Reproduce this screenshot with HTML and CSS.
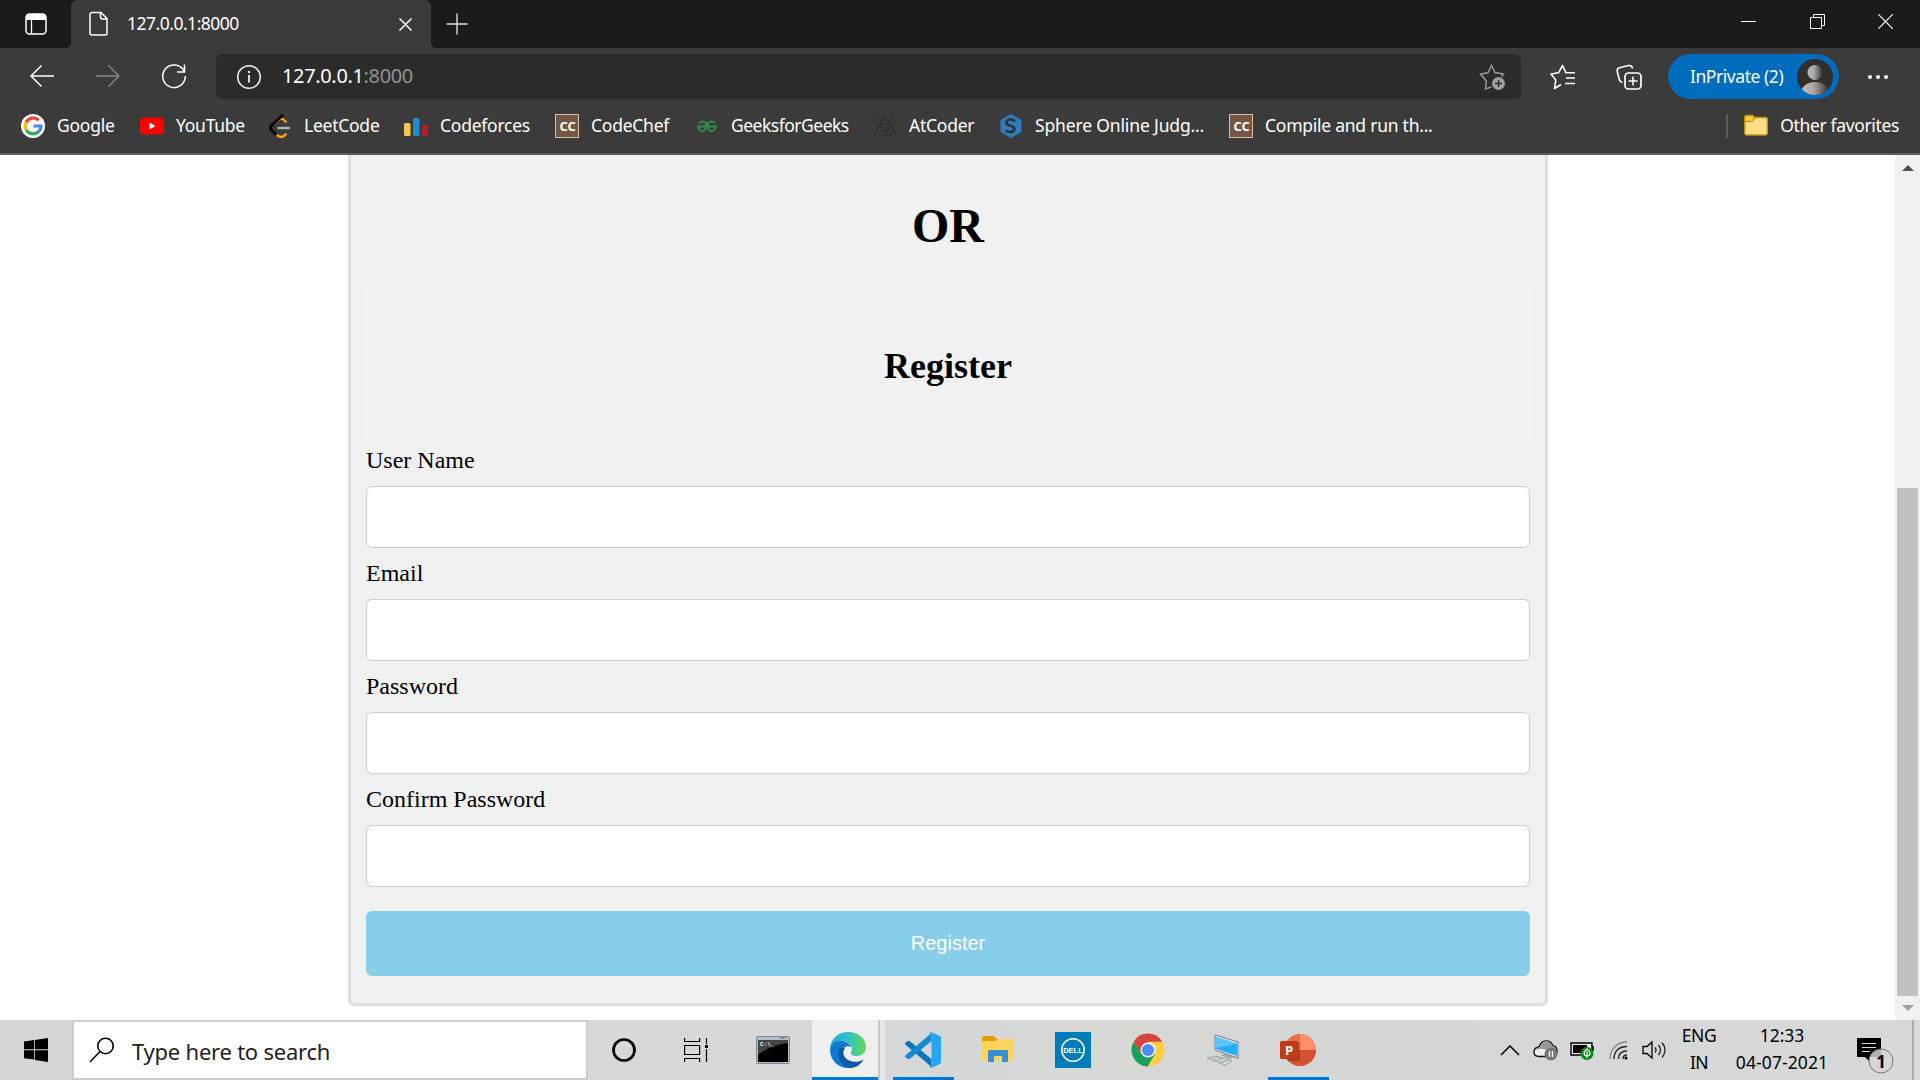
FILE: index.html
```html
<!DOCTYPE html>
<html lang="en">
<head>
<meta charset="utf-8">
<title>127.0.0.1:8000</title>
<link rel="stylesheet" href="styles.css">
</head>
<body>
<div class="desktop">
  <header class="browser">
    <div class="tabstrip">
      <div class="tab-actions">
        <svg width="22" height="22" viewBox="0 0 22 22"><rect x="1" y="1" width="20" height="20" rx="3.5" fill="none" stroke="#fff" stroke-width="1.5"/><path d="M1 7V4a3 3 0 0 1 3-3h14a3 3 0 0 1 3 3v3z" fill="#fff"/><path d="M6.5 7v14" stroke="#fff" stroke-width="1.3"/></svg>
      </div>
      <div class="tab">
        <svg class="tab-file" width="20" height="26" viewBox="0 0 20 26"><path d="M4 1.5h8l6 6V22a2 2 0 0 1-2 2H3a2 2 0 0 1-2-2V3.500a2 2 0 0 1 2-2zM11.500 1.500V6a2 2 0 0 0 2 2H18" fill="none" stroke="#fff" stroke-width="1.5"/></svg>
        <span class="tab-title">127.0.0.1:8000</span>
        <svg class="tab-close" width="13" height="13" viewBox="0 0 13 13"><path d="M.5.5l12 12M12.500.5l-12 12" stroke="#fff" stroke-width="1.500"/></svg>
      </div>
      <svg class="new-tab" width="22" height="22" viewBox="0 0 22 22"><path d="M11 .5v21M.5 11h21" stroke="#ddd" stroke-width="1.400"/></svg>
      <div class="window-controls">
        <span><svg width="15" height="15"><path d="M0 7.500h15" stroke="#fff"/></svg></span>
        <span><svg width="15" height="15"><path d="M3.500 3.500v-3h11v11h-3M.5 3.500h11v11H.5z" fill="none" stroke="#fff"/></svg></span>
        <span><svg width="15" height="15"><path d="M0 0l15 15M15 0L0 15" stroke="#fff" stroke-width="1.200"/></svg></span>
      </div>
    </div>

    <div class="toolbar">
      <div class="nav">
        <svg width="24" height="24" viewBox="0 0 24 24"><path d="M24 12H1M11.500 1.500L1 12l10.500 10.500" fill="none" stroke="#fff" stroke-width="1.500"/></svg>
        <svg width="24" height="24" viewBox="0 0 24 24"><path d="M0 12h23M12.500 1.500L23 12 12.500 22.500" fill="none" stroke="#858585" stroke-width="1.500"/></svg>
        <svg width="24" height="25" viewBox="0 0 24 25"><path d="M22 7A11.300 11.300 0 1 0 23.300 12M22.500.5V8H15" fill="none" stroke="#fff" stroke-width="1.500"/></svg>
      </div>
      <div class="address">
        <svg width="26" height="26" viewBox="0 0 26 26"><circle cx="13" cy="13" r="11.300" fill="none" stroke="#eee" stroke-width="1.500"/><path d="M13 11v7.500" stroke="#ddd" stroke-width="2"/><circle cx="13" cy="8" r="1.200" fill="#eee"/></svg>
        <span class="url">127.0.0.1<span class="port">:8000</span></span>
        <svg class="add-fav" width="27" height="27" viewBox="0 0 27 27"><path d="M12 23l-5.500 2 .8-8L1.500 10l7.500-1.200L12.500 1.500 16 8.500l8.500 1.500-2 2.500" fill="none" stroke="#999" stroke-width="1.500"/><circle cx="19.500" cy="19.500" r="6.500" fill="#a0a0a0"/><path d="M19.500 16v7M16 19.500h7" stroke="#2b2b2b" stroke-width="1.500"/></svg>
      </div>
      <svg class="favorites" width="26" height="26" viewBox="0 0 26 26"><path d="M11 20.500l-6.500 4 1.300-8.500L1 10l7.500-1.200L12.500 1.500l3.500 7.300h9M16 14h9M15 19.500h10" fill="none" stroke="#fff" stroke-width="1.600" stroke-linejoin="round"/></svg>
      <svg class="collections" width="26" height="26" viewBox="0 0 26 26"><path d="M6.500 18.500Q4 18 3.500 16L1.200 7.500Q.8 4.500 3.500 3.800L12.500 1.500Q16 1 16.500 4.500" fill="none" stroke="#fff" stroke-width="1.600"/><rect x="9" y="9" width="16" height="16" rx="3.500" fill="none" stroke="#fff" stroke-width="1.700"/><path d="M17 12.500v9M12.500 17h9" stroke="#fff" stroke-width="1.500"/></svg>
      <div class="profile"><span>InPrivate (2)</span>
        <svg width="36" height="36" viewBox="0 0 36 36"><defs><linearGradient id="av"><stop stop-color="#c2bebb"/><stop offset=".45" stop-color="#aaa6a3"/><stop offset="1" stop-color="#33302d"/></linearGradient><clipPath id="avc"><circle cx="18" cy="18" r="18"/></clipPath></defs><circle cx="18" cy="18" r="18" fill="#312e2b"/><g clip-path="url(#avc)" fill="url(#av)"><circle cx="18" cy="13.500" r="7.500"/><ellipse cx="18" cy="34" rx="14" ry="11"/></g></svg>
      </div>
      <svg class="more" width="22" height="6"><g fill="#fff"><circle cx="3" cy="3" r="2"/><circle cx="11" cy="3" r="2"/><circle cx="19" cy="3" r="2"/></g></svg>
    </div>

    <nav class="bookmarks">
      <a class="bm bm-google"><svg viewBox="0 0 24 24"><circle cx="12" cy="12" r="12" fill="#fff"/><g fill="none" stroke-width="3.200"><path d="M17.800 6.200A8 8 0 0 0 5.200 8.300" stroke="#ea4335"/><path d="M5.200 8.300a8 8 0 0 0 0 7.700" stroke="#fbbc05"/><path d="M5.200 16a8 8 0 0 0 12.200 1.800" stroke="#34a853"/><path d="M17.300 17.900A8 8 0 0 0 20 12H12.500" stroke="#4285f4"/></g></svg><span>Google</span></a>
      <a class="bm bm-youtube"><svg viewBox="0 0 24 24"><rect y="3.500" width="24" height="17" rx="4" fill="#f00"/><path d="M9.500 8.500v7l6-3.500z" fill="#fff"/></svg><span>YouTube</span></a>
      <a class="bm bm-leet"><svg viewBox="0 0 24 24"><path d="M7.500 8.500L11.500 5q2.500-1 4.500 1l2.500 2.500M8 20q4.500 5 8.500 1.500l2-2" fill="none" stroke="#ffa116" stroke-width="2.400"/><path d="M15 1L3.500 11.500q-2 2 0 4.500L8.500 21" fill="none" stroke="#000" stroke-width="2.800"/><path d="M9.500 14h12.500" stroke="#b3b3b3" stroke-width="2.400"/></svg><span>LeetCode</span></a>
      <a class="bm bm-forces"><svg viewBox="0 0 24 24"><rect y="9" width="6.500" height="13" rx="1.500" fill="#f6c751"/><rect x="9" y="4" width="6.500" height="18" rx="1.500" fill="#1b8dd0"/><rect x="18" y="11" width="6" height="11" rx="1.500" fill="#b21f24"/></svg><span>Codeforces</span></a>
      <a class="bm bm-chef"><svg viewBox="0 0 24 24"><rect x=".5" y=".5" width="23" height="23" fill="#745743" stroke="#d8bfa7"/><text x="12.500" y="17" class="cc">CC</text></svg><span>CodeChef</span></a>
      <a class="bm bm-geeks"><svg viewBox="0 0 24 24"><g fill="none" stroke="#2f8d46" stroke-width="2"><path d="M4 9q4-3 7 0v3.500M20 9q-4-3-7 0v3.500M2 12.500h20M3.500 13c0 5 7.500 5.500 7.500-.5M20.500 13c0 5-7.500 5.500-7.500-.5"/></g></svg><span>GeeksforGeeks</span></a>
      <a class="bm bm-at"><svg viewBox="0 0 24 24"><g fill="none" stroke="#2d2d2d" stroke-width="1.200"><path d="M8 7q4-3 8 0l1 6-5 5-5-5zM10 2h4M4 5l3-2M17 3l3 2M2 8l3 2-1 7-3 2M22 8l-3 2 1 7 3 2M6 21h12"/><path d="M9 10h6M10 13h4"/></g></svg><span>AtCoder</span></a>
      <a class="bm bm-sphere"><svg viewBox="0 0 24 24"><path d="M12 0l10.500 6v12L12 24 1.500 18V6z" fill="#2f7bbd"/><path d="M16 7.500q-1-2-4-2c-6 0-6 5-1 6s7 6 0 6.500q-3.500 0-4-2" fill="none" stroke="#333" stroke-width="2.700"/></svg><span>Sphere Online Judg...</span></a>
      <a class="bm bm-compile"><svg viewBox="0 0 24 24"><rect x=".5" y=".5" width="23" height="23" fill="#745743" stroke="#d8bfa7"/><text x="12.500" y="17" class="cc">CC</text></svg><span>Compile and run th...</span></a>
      <a class="bm bm-other"><svg viewBox="0 0 24 24"><path d="M.8 3.500q0-2 2-2h6l2 2h10.500q2 0 2 2v13.500q0 2-2 2H2.800q-2 0-2-2z" fill="#ffdf86" stroke="#c6920e" stroke-width="1.400"/><path d="M1 7.500V3q0-1.300 1.500-1.300h6L10.500 4 8 7.200z" fill="#ffcd43" stroke="#c6920e" stroke-width="1.200"/></svg><span>Other favorites</span></a>
    </nav>
  </header>

  <div class="viewport">
    <main class="page">
      <div class="card">
        <h1>OR</h1>
        <h2>Register</h2>
        <form>
          <label for="user">User Name</label><input id="user" type="text">
          <label for="email">Email</label><input id="email" type="text">
          <label for="pw">Password</label><input id="pw" type="password">
          <label for="pw2">Confirm Password</label><input id="pw2" type="password">
          <button type="button">Register</button>
        </form>
      </div>
    </main>
    <div class="scrollbar">
      <svg width="12" height="6"><path d="M0 6L6 0l6 6z" fill="#505050"/></svg>
      <div class="thumb"></div>
      <svg width="12" height="6"><path d="M0 0l6 6 6-6z" fill="#a0a0a0"/></svg>
    </div>
  </div>

  <footer class="taskbar">
    <div class="start"><svg width="24" height="24" viewBox="0 0 24 24"><path d="M0 3.500l10-1.400v9.200H0zM10.800 2L24 0v11.300H10.800zM0 12.200h10v9.300L0 20.300zM10.800 12.200H24V24l-13.200-1.900z"/></svg></div>
    <div class="search">
      <svg width="26" height="26" viewBox="0 0 26 26"><circle cx="16.500" cy="9" r="7.700" fill="none" stroke="#000" stroke-width="1.600"/><path d="M11 14.500L1 25" stroke="#000" stroke-width="1.600"/></svg>
      <span>Type here to search</span>
    </div>
    <div class="slot narrow"><svg width="26" height="26"><circle cx="13" cy="13" r="10.500" fill="none" stroke="#000" stroke-width="2.700"/></svg></div>
    <div class="slot narrow"><svg width="24" height="24"><path d="M.6 0v3.500h15V0M.6 7.500h15v9h-15zM.6 24v-3.500h15V24M22.500 0v6M22.500 11v13" fill="none" stroke="#000" stroke-width="1.200"/><path d="M21 7h3v3h-3z"/></svg></div>
    <div class="slot first"><svg width="34" height="28" viewBox="0 0 34 28"><rect x=".5" y=".5" width="33" height="27" rx="1" fill="#b4bdc9" stroke="#7e8791"/><path d="M2 4h30v22H2z"/><path d="M2 4h30v3Q14 9 2 19z" fill="#444"/><path d="M24 2h6" stroke="#536b91" stroke-width="1.500" stroke-dasharray="1.500 1"/><text x="4" y="10" class="prompt">C:\_</text></svg></div>
    <div class="slot edge">
      <svg width="36" height="36" viewBox="0 0 36 36"><defs><linearGradient id="ea" x1="0" x2="1"><stop stop-color="#28a5dc"/><stop offset=".5" stop-color="#2fc2c9"/><stop offset="1" stop-color="#64d94a"/></linearGradient><linearGradient id="eb" x1="0" y1="0" x2="0" y2="1"><stop stop-color="#1479ca"/><stop offset="1" stop-color="#087bd8"/></linearGradient></defs><path d="M0 18C0 7 8 0 18 0c11 0 18 7 18 15 0 6-5 9-9 9-4 0-7-1-6-4 3-4-1-10-7-11C7 8 1 12 0 18z" fill="url(#ea)"/><path d="M0 18C1 11 7 8 13 9c5 1 8 4 8 6-5-2-8 1-8 6 0 9 10 15 18 9l2-2c-3 5-8 8-15 8C8 36 0 28 0 18z" fill="url(#eb)"/><path d="M10 16c-4 9 0 18 10 20 6 0 11-4 13.500-8.500-5 3-11 3-15.500.5-5-3-6-8-3-12z" fill="#1257a4"/></svg>
    </div>
    <div class="slot open"><svg width="36" height="36" viewBox="0 0 36 36"><path d="M0 11l3-2q1-.5 2 .3L26.500 27v8L.8 13q-1-1-.8-2z" fill="#0877b9"/><path d="M0 25l3 2q1 .5 2-.3L26.500 9V1L.8 23q-1 1-.8 2z" fill="#168bd2"/><path d="M26 0l9 4q1 .5 1 2v24q0 1.500-1 2l-9 4-2-1 2.500-1V2L24 1z" fill="#27a4f2"/></svg></div>
    <div class="slot"><svg width="34" height="28" viewBox="0 0 34 28"><path d="M1 2q0-2 2-2h10l3 3h16q1 0 1 1v21H1z" fill="#dfa108"/><path d="M1 5h13l3-2h16v22H1z" fill="#ffd35b"/><path d="M7 26V15q0-1 1-1h18q1 0 1 1v11h-6v-6h-8v6z" fill="#348fd5"/></svg></div>
    <div class="slot"><svg width="36" height="36" viewBox="0 0 36 36"><path d="M0 0h36v36H0z" fill="#007db8"/><circle cx="18" cy="18" r="11.200" fill="none" stroke="#fff" stroke-width="1.500"/><text x="18" y="21" class="dell">DELL</text></svg></div>
    <div class="slot"><svg width="34" height="34" viewBox="0 0 34 34"><circle cx="17" cy="17" r="16.500" fill="#ffce45"/><path d="M17 .5a16.500 16.500 0 0 1 14.300 8.300H17L10 21 2.700 8.700A16.500 16.500 0 0 1 17 .5z" fill="#d7453d"/><path d="M2.700 8.700a16.500 16.500 0 0 0 14 24.800L24 21H10z" fill="#17a05d"/><circle cx="17" cy="17" r="7.500" fill="#f4f6fa"/><circle cx="17" cy="17" r="6" fill="#4c8bf5"/></svg></div>
    <div class="slot"><svg width="34" height="34" viewBox="0 0 34 34"><path d="M9 2l23 7v16L9 17z" fill="#e9f3f8" stroke="#647985"/><path d="M10 4l21 6.500V23L10 16z" fill="#26aef2"/><path d="M10 4l21 6.500L10 15z" fill="#5dc5ff"/><path d="M15 22l5-1 8 3-5 2z" fill="#9da5aa"/><path d="M1 25l9-2 16 5-7 4z" fill="#e8e9e9" stroke="#9b9fa2"/><path d="M5 25l14 5M9 24l13 5M4 27l8-3M9 28l8-3M14 30l8-3" stroke="#9b9fa2" stroke-width=".7"/></svg></div>
    <div class="slot open ppt"><svg width="36" height="34" viewBox="0 0 36 34"><circle cx="20" cy="17" r="16" fill="#ed6c47"/><path d="M20 1a16 16 0 0 1 16 16H20z" fill="#ff8f6b"/><path d="M4 17h32a16 16 0 0 1-32 0z" fill="#d35230"/><path d="M18 9q2 0 2 2v17H8l-3-3z" fill="#000" opacity=".2"/><rect y="8" width="18" height="18" rx="1.500" fill="#c13b1b"/><text x="9" y="21.500" class="pp">P</text></svg></div>

    <div class="tray">
      <svg class="t-up" width="20" height="11"><path d="M1 10l9-9 9 9" fill="none" stroke="#000" stroke-width="1.500"/></svg>
      <svg class="t-cloud" width="25" height="22" viewBox="0 0 25 22"><path d="M6 17.500q-5 0-5-4.500t5-5q2-6 7-6t7 5q4 0 4 5t-4 5.500z" fill="#eee" stroke="#111" stroke-width="1.400"/><path d="M2 11q2-3 5-3 2-6 6-6t6.500 5q4 1 4 4l-9 1q-4-4-12-1z" fill="#999"/><circle cx="18" cy="15" r="6.500" fill="#777"/><path d="M16.500 12v6M19.500 12v6" stroke="#fff" stroke-width="1.300"/></svg>
      <svg class="t-battery" width="26" height="20" viewBox="0 0 26 20"><path d="M1 3h21v12H1z" fill="#e6e6e6" stroke="#000" stroke-width="1.400"/><path d="M23 6v5" stroke="#000" stroke-width="1.400"/><path d="M3 5h14v8H3z"/><circle cx="17" cy="13.500" r="6.500" fill="#10891b"/><path d="M17 9q4 3 2.500 6-2.500 2-5 0Q13 12 17 9zM17 11.500v6.500" fill="none" stroke="#fff" stroke-width="1.200"/></svg>
      <svg class="t-wifi" width="20" height="20" viewBox="0 0 20 20"><g fill="none" stroke-width="1.300"><path d="M1 19C1 9 8 2 18 2" stroke="#888"/><path d="M5 19C5 11 10 6.500 18 6.500M9.500 19c0-5 3-8 8.500-8M14 19c0-2.500 1.500-4 4-4" stroke="#222"/></g><circle cx="17" cy="18" r="1.500"/></svg>
      <svg class="t-sound" width="24" height="20" viewBox="0 0 24 20"><path d="M1 6.500h4L10 2v16l-5-4.500H1z" fill="none" stroke="#000" stroke-width="1.300"/><path d="M13 7.500q2 2.500 0 5M16.500 5q4 5 0 10M20 2.500q6 7.500 0 15" fill="none" stroke="#222" stroke-width="1.300"/></svg>
      <div class="lang"><span>ENG</span><span>IN</span></div>
      <div class="clock"><span class="time">12:33</span><span class="date">04-07-2021</span></div>
      <svg class="t-note" width="38" height="38" viewBox="0 0 38 38"><path d="M1 2h24v19H14v5l-5-5H1z"/><path d="M6 7.500h14M6 11.500h14M6 15.500h8" stroke="#d7d7d7" stroke-width="1.200"/><circle cx="25" cy="25" r="12" fill="#d5d5d5" fill-opacity=".82" stroke="#777"/><text x="25" y="31.500" class="badge">1</text></svg>
    </div>
  </footer>
</div>
</body>
</html>
```
FILE: styles.css
```css
* { box-sizing: border-box; }
body { margin: 0; overflow: hidden; }
svg { display: block; flex: none; }
.desktop { width: 1920px; height: 1080px; display: flex; flex-direction: column; font-family: "Noto Sans", "Open Sans", sans-serif; }

/* Browser frame */
.browser { height: 155px; flex: none; background: #3b3b3b; border-bottom: 2px solid #5c5c5c; color: #fff; }
.tabstrip { height: 48px; display: flex; background: #3b3b3b; }
.tab-actions { width: 71px; background: #1b1b1b; padding: 13px 0 0 25px; border-bottom-right-radius: 5px; }
.tab { width: 360px; display: flex; align-items: center; background: #3b3b3b; border-radius: 6px 6px 0 0; padding: 0 19px 0 18px; box-shadow: 0 -10px 0 #1b1b1b; }
.tab-title { margin-left: 18px; padding-bottom: 2px; flex: 1; font-size: 17.500px; letter-spacing: -.5px; }
.tab-close { margin-top: 1px; }
.new-tab { width: 61px; height: 48px; padding: 13px 24px 13px 15px; background: #1b1b1b; border-bottom-left-radius: 5px; }
.window-controls { flex: 1; background: #1b1b1b; display: flex; justify-content: flex-end; }
.window-controls span { width: 68.500px; height: 43px; display: flex; align-items: center; justify-content: center; }

.toolbar { height: 57px; display: flex; align-items: center; }
.nav { width: 216px; padding-left: 30px; display: flex; align-items: center; gap: 42px; }
.nav svg { margin-bottom: 1px; }
.address { width: 1305px; height: 45px; border-radius: 6px; background: #2b2b2b; display: flex; align-items: center; padding: 0 15px 0 20px; }
.url { margin-left: 20px; padding-bottom: 2px; flex: 1; font-size: 20px; letter-spacing: -.35px; }
.port { color: #929292; }
.add-fav { margin-top: 2px; }
.favorites { margin-left: 29px; }
.collections { margin-left: 40px; }
.profile { width: 171px; height: 45px; margin-left: 26px; border-radius: 23px; background: #006cbe; display: flex; align-items: center; justify-content: space-between; padding: 0 6px 0 22px; font-size: 17.500px; letter-spacing: -.45px; white-space: nowrap; }
.profile span { padding-bottom: 2px; }
.more { margin-left: 28px; }

.bookmarks { height: 42px; display: flex; padding-left: 21px; }
.bm { display: flex; align-items: center; gap: 12px; font-size: 17.500px; letter-spacing: -.25px; white-space: nowrap; }
.bm svg { width: 24px; height: 24px; }
.bm span { padding-bottom: 2px; }
.bm-google { width: 119px; }
.bm-youtube { width: 128px; }
.bm-leet { width: 136px; }
.bm-forces { width: 151px; }
.bm-chef { width: 140px; }
.bm-geeks { width: 178px; letter-spacing: -.5px; }
.bm-at { width: 126px; }
.bm-sphere { width: 230px; letter-spacing: -.15px; }
.bm-other { margin: 9px 21px 9px auto; border-left: 2px solid #5c5c5c; padding-left: 16px; letter-spacing: -.35px; }
.cc { font: bold 13px "Open Sans", sans-serif; fill: #fff; text-anchor: middle; letter-spacing: -.3px; }

/* Web page */
.viewport { height: 865px; display: flex; background: #fff; }
.page { flex: 1; font-family: "Liberation Serif", serif; color: #000; }
.card { width: 1200px; height: 851px; margin-left: 348px; background: #f0f0f0; border: 3px solid #ddd; border-top: 0; border-radius: 0 0 6px 6px; padding: 0 15px; }
h1 { margin: 0; height: 130px; padding-top: 43px; font-size: 48px; line-height: 56px; text-align: center; }
h2 { margin: 0; height: 162px; border-radius: 6px; background: #f1f1f1; font-size: 36px; line-height: 162px; text-align: center; }
form { display: flex; flex-direction: column; }
label { font-size: 24px; line-height: 27px; }
input { height: 62px; margin: 12px 0; border: 1px solid #ccc; border-radius: 6px; background: #fff; }
button { height: 65px; margin-top: 12px; border: 0; border-radius: 6px; background: #87ceeb; color: #fff; font: 20px "Liberation Sans", sans-serif; }
.scrollbar { width: 25px; background: #f1f1f1; display: flex; flex-direction: column; align-items: center; padding: 10px 0 9px; }
.thumb { width: 21px; height: 508px; margin: 317px 0 9px; background: #c1c1c1; }

/* Taskbar */
.taskbar { height: 60px; display: flex; color: #000; background: linear-gradient(90deg, #d6d6d6 0, #d8d8d8 45%, #d3d7d9 49%, #d8d8d4 56%, #d5d6d7 70%, #d8d8d8); }
.start { width: 72px; padding: 18px 24px; }
.search { width: 516px; background: #fff; border: 2px solid #ccc; display: flex; align-items: center; padding-left: 15px; font-size: 22px; letter-spacing: -.23px; color: #222; }
.search svg { margin-bottom: 1px; }
.search span { margin-left: 17px; padding-top: 1px; }
.slot { width: 75px; display: flex; align-items: center; justify-content: center; }
.narrow { width: 72px; }
.first { margin-left: 3px; }
.edge { background: linear-gradient(#0078d7, #0078d7) 2px 57px / 66px 3px no-repeat, linear-gradient(90deg, transparent 2px, #efefef 2px, #efefef 68px, #c6c8c8 68px, #c6c8c8 70px, #e4e6e7 70px); }
.open { background: linear-gradient(#0078d7, #0078d7) 8px 57px / 61px 3px no-repeat; }
.prompt { font: bold 6px "Liberation Mono", monospace; fill: #fff; }
.dell { font: bold 7.500px "Liberation Sans", sans-serif; fill: #fff; text-anchor: middle; }
.pp { font: bold 13px "Open Sans", sans-serif; fill: #fff; text-anchor: middle; }
.tray { width: 429px; margin-left: auto; display: flex; align-items: center; border-right: 6px solid #d8d8d8; box-shadow: inset -2px 0 #aaa; }
.t-up { margin-left: 9px; }
.t-cloud { margin-left: 13px; }
.t-battery { margin-left: 12px; }
.t-wifi { margin-left: 13px; }
.t-sound { margin-left: 13px; }
.lang, .clock { display: flex; flex-direction: column; align-items: center; font-size: 17.500px; line-height: 27px; letter-spacing: -.5px; padding-bottom: 2px; }
.lang { width: 48px; margin-left: 9px; }
.clock { width: 118px; letter-spacing: 0; }
.date { letter-spacing: .1px; }
.t-note { margin: 9px 0 0 15px; }
.badge { font: bold 17px "Noto Sans", sans-serif; text-anchor: middle; }
```
